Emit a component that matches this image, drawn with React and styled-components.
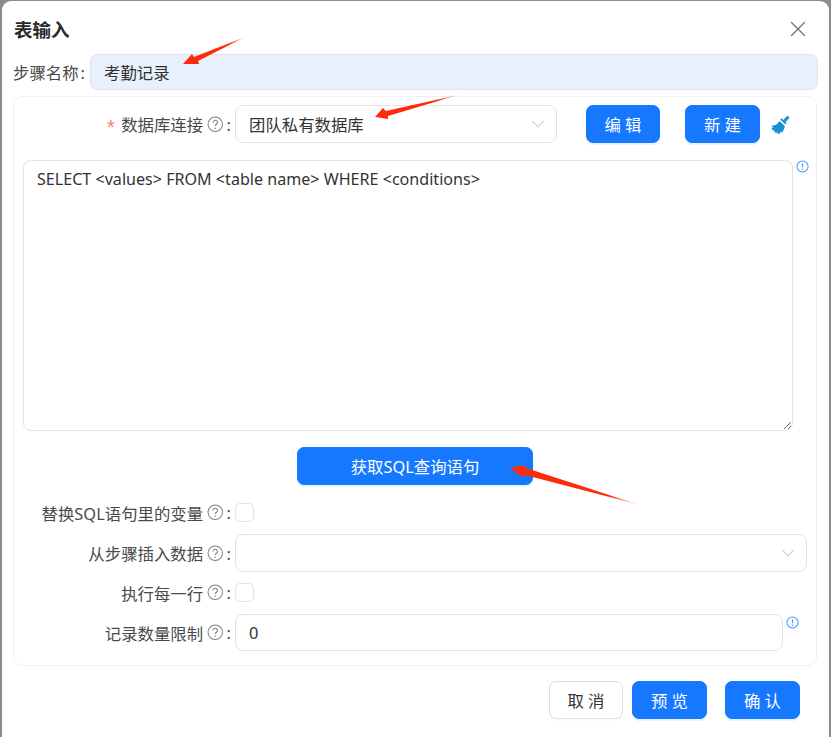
import React from "react";
import styled, { createGlobalStyle } from "styled-components";
import { X, ChevronDown } from "lucide-react";

const Global = createGlobalStyle`
  html, body { margin: 0; padding: 0; background: #fff; }
  * { box-sizing: border-box; }
`;

const Backdrop = styled.div`
  position: relative;
  width: 831px;
  height: 737px;
  overflow: hidden;
  background: #8c8c8c;
  padding: 1px 2px 0 2px;
  font-family: "Noto Sans", "Noto Sans CJK SC", sans-serif;
  font-size: 16.4px;
  color: #303030;
`;

const Modal = styled.div`
  width: 827px;
  height: 736px;
  background: #fff;
  border-radius: 9px 9px 0 0;
  padding: 0 12px 0 11px;
  display: flex;
  flex-direction: column;
`;

const Header = styled.div`
  height: 53px;
  display: flex;
  align-items: center;
  justify-content: space-between;
  padding: 2px 6px 0 1px;
`;

const Title = styled.div`
  font-size: 18.5px;
  font-weight: 700;
  color: #2a2a2a;
`;

const NameRow = styled.div`
  display: flex;
  align-items: center;
  height: 36px;
`;

const NameLabel = styled.label`
  width: 77px;
  color: #4a4a4a;
  white-space: nowrap;
  span {
    margin-left: 2px;
  }
`;

const NameInput = styled.div`
  flex: 1;
  height: 36px;
  margin-right: -1px;
  background: #e8f0fe;
  border: 1px solid #dfe5ee;
  border-radius: 7px;
  padding: 0 13px;
  display: flex;
  align-items: center;
`;

const Card = styled.div`
  margin-top: 6px;
  width: 804px;
  height: 570px;
  border: 1px solid #f0f0f0;
  border-radius: 9px;
  padding: 8px 0 0;
  display: flex;
  flex-direction: column;
`;

const Row = styled.div`
  display: flex;
  align-items: center;
  height: ${(p) => p.$h || 38}px;
  margin-top: ${(p) => p.$top || 0}px;
`;

const Label = styled.label`
  width: 217px;
  margin-right: 4px;
  flex: none;
  display: flex;
  align-items: center;
  justify-content: flex-end;
  color: #4a4a4a;
  white-space: nowrap;
  gap: 4px;
`;

const Star = styled.span`
  color: #ff7875;
  margin-right: 2px;
  font-size: 20px;
  line-height: 16px;
  vertical-align: -3px;
  font-family: "Liberation Sans", sans-serif;
`;

const Colon = styled.span`
  margin-left: -1px;
`;

const HelpIcon = styled.svg`
  width: 16.5px;
  height: 16.5px;
  flex: none;
  color: #808080;
`;

const Field = styled.div`
  width: ${(p) => p.$w}px;
  height: ${(p) => p.$h || 38}px;
  flex: none;
  border: 1px solid #e2e2e2;
  border-radius: 8px;
  padding: 0 13px;
  display: flex;
  align-items: center;
  justify-content: space-between;
  background: #fff;
  color: #333;
`;

const Arrow = styled(ChevronDown)`
  width: 22px;
  height: 22px;
  margin-right: -6px;
  color: #bfbfbf;
`;

const Check = styled.div`
  width: 19px;
  height: 19px;
  border: 1px solid #e2e2e2;
  border-radius: 5px;
  background: #fff;
`;

const Button = styled.button`
  height: 38px;
  width: ${(p) => p.$w || 75}px;
  margin-left: ${(p) => p.$left || 0}px;
  flex: none;
  border-radius: 7px;
  font: inherit;
  letter-spacing: ${(p) => (p.$wide ? "4px" : "0")};
  text-indent: ${(p) => (p.$wide ? "4px" : "0")};
  padding: 0;
  cursor: pointer;
  border: 1px solid ${(p) => (p.$ghost ? "#dedede" : "#1677ff")};
  background: ${(p) => (p.$ghost ? "#fff" : "#1677ff")};
  color: ${(p) => (p.$ghost ? "#333" : "#fff")};
  box-shadow: 0 2px 0 ${(p) => (p.$ghost ? "rgba(0,0,0,0.02)" : "rgba(5,145,255,0.1)")};
`;

const Broom = styled.svg`
  width: 19px;
  height: 19px;
  margin-left: 11px;
  flex: none;
`;

const SqlRow = styled.div`
  display: flex;
  margin: 17px 0 0 9px;
`;

const SqlBox = styled.textarea`
  width: 770px;
  height: 271px;
  flex: none;
  border: 1px solid #e2e2e2;
  border-radius: 8px;
  padding: 8px 13px;
  font: inherit;
  font-size: 16.1px;
  line-height: 20px;
  color: #333;
  outline: none;
  resize: vertical;
`;

const InfoIcon = styled.svg`
  width: 13px;
  height: 13px;
  flex: none;
  margin-left: 3px;
  margin-top: ${(p) => p.$top || 0}px;
  color: #3f9bff;
  align-self: flex-start;
`;

const Center = styled.div`
  display: flex;
  justify-content: center;
  margin-top: 16px;
`;

const Footer = styled.div`
  display: flex;
  justify-content: flex-end;
  margin-top: 15px;
  padding-right: 17px;
`;

const Mark = styled.svg`
  position: absolute;
  left: 0;
  top: 0;
  width: 831px;
  height: 738px;
  pointer-events: none;
`;

const Help = () => (
  <HelpIcon viewBox="0 0 16 16" fill="none" stroke="currentColor">
    <circle cx="8" cy="8" r="7" strokeWidth="1" />
    <path d="M5.9 6.3a2.1 2.1 0 1 1 3.3 1.7c-.8.5-1.2.9-1.2 1.8" strokeWidth="1.1" />
    <circle cx="8" cy="11.8" r=".7" fill="currentColor" stroke="none" />
  </HelpIcon>
);

const Info = ({ top }) => (
  <InfoIcon $top={top} viewBox="0 0 14 14" fill="none" stroke="currentColor">
    <circle cx="7" cy="7" r="6" strokeWidth="1.1" />
    <path d="M7 3.6v4.2" strokeWidth="1.3" />
    <circle cx="7" cy="10" r=".8" fill="currentColor" stroke="none" />
  </InfoIcon>
);

export default function App() {
  return (
    <>
      <Global />
      <Backdrop>
        <Modal>
          <Header>
            <Title>表输入</Title>
            <X size={26} strokeWidth={1.25} color="#757575" />
          </Header>
          <NameRow>
            <NameLabel>步骤名称<span>:</span></NameLabel>
            <NameInput>考勤记录</NameInput>
          </NameRow>
          <Card>
            <Row>
              <Label>
                <span><Star>*</Star> 数据库连接</span>
                <Help />
                <Colon>:</Colon>
              </Label>
              <Field $w={322}>
                团队私有数据库
                <Arrow strokeWidth={1.1} />
              </Field>
              <Button $wide $w={74} $left={29}>编辑</Button>
              <Button $wide $left={25}>新建</Button>
              <Broom viewBox="0 0 20 20">
                <path d="M12 6.4 17.2.8l2.4 2.2-5.4 5.6z" fill="#1b8fd6" />
                <path d="M8.8 6.2c2.2 1.8 4 3.6 5.8 5.6-.3 2.6-1.7 5-3.6 7l-1.5-1.7.1 2.6-2.2.3-1-2.6-.4 1.9-2.2-1.2-.5-2.3-1 1.1L.4 13.8l2.2-1L0 11.3c3.4.2 7-1.3 8.8-5.1z" fill="#1b8fd6" />
                <path d="M9.6 4.6 11 3.4l5.4 5.2-1.2 1.5z" fill="#1b8fd6" />
              </Broom>
            </Row>
            <SqlRow>
              <SqlBox readOnly defaultValue="SELECT <values> FROM <table name> WHERE <conditions>" />
              <Info />
            </SqlRow>
            <Center>
              <Button $w={236}>获取SQL查询语句</Button>
            </Center>
            <Row $h={19} $top={18}>
              <Label>
                替换SQL语句里的变量
                <Help />
                <Colon>:</Colon>
              </Label>
              <Check />
            </Row>
            <Row $top={12}>
              <Label>
                从步骤插入数据
                <Help />
                <Colon>:</Colon>
              </Label>
              <Field $w={572}>
                <span />
                <Arrow strokeWidth={1.1} />
              </Field>
            </Row>
            <Row $h={19} $top={11}>
              <Label>
                执行每一行
                <Help />
                <Colon>:</Colon>
              </Label>
              <Check />
            </Row>
            <Row $h={37} $top={12}>
              <Label>
                记录数量限制
                <Help />
                <Colon>:</Colon>
              </Label>
              <Field $w={548} $h={37}>0</Field>
              <Info top={2} />
            </Row>
          </Card>
          <Footer>
            <Button $wide $ghost $w={74}>取消</Button>
            <Button $wide $left={9}>预览</Button>
            <Button $wide $left={18}>确认</Button>
          </Footer>
        </Modal>
        <Mark viewBox="0 0 831 738">
          <defs>
            <linearGradient id="a1" x1="183" y1="64" x2="245" y2="37" gradientUnits="userSpaceOnUse">
              <stop offset="0" stopColor="#ff2a0a" />
              <stop offset="0.75" stopColor="#ff2a0a" />
              <stop offset="1" stopColor="#ff2a0a" stopOpacity="0.2" />
            </linearGradient>
            <linearGradient id="a2" x1="375" y1="117" x2="458" y2="95" gradientUnits="userSpaceOnUse">
              <stop offset="0" stopColor="#ff2a0a" />
              <stop offset="0.75" stopColor="#ff2a0a" />
              <stop offset="1" stopColor="#ff2a0a" stopOpacity="0.2" />
            </linearGradient>
            <linearGradient id="a3" x1="510" y1="468" x2="640" y2="505" gradientUnits="userSpaceOnUse">
              <stop offset="0" stopColor="#ff2a0a" />
              <stop offset="0.75" stopColor="#ff2a0a" />
              <stop offset="1" stopColor="#ff2a0a" stopOpacity="0.1" />
            </linearGradient>
          </defs>
          <path d="M183 64 L192 54 L194 57 L245 37 L198 61 L199 64 Z" fill="url(#a1)" />
          <path d="M375 117 L383 108 L386 111 L458 95 L388 116 L388 119 Z" fill="url(#a2)" />
          <path d="M510 468 L523 465 L526 468 L640 505 L525 475 L522 477 Z" fill="url(#a3)" />
        </Mark>
      </Backdrop>
    </>
  );
}
